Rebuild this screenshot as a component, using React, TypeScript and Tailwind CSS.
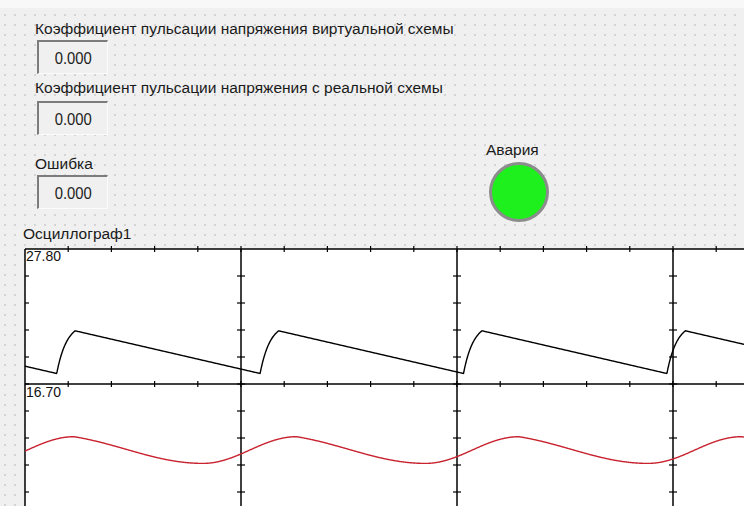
import React from 'react';

const W = 719;
const H = 257;
const GRID_X = [0, 216, 432, 648];
const GRID_Y = [0, 135];

// sawtooth: fast exponential charge, then a slow linear discharge
function sawPoints() {
  const period = 203.4;
  const rise = 18.5;
  const yMin = 124.5;
  const yPeak = 81.8;
  const tau = 10;
  const firstMin = 31.7;
  const pts: string[] = [];
  for (let x = 0; x <= W; x += 0.5) {
    const t = (((x - firstMin) % period) + period) % period;
    let y: number;
    if (t < rise) {
      y = yMin - ((yMin - yPeak) * (1 - Math.exp(-t / tau))) / (1 - Math.exp(-rise / tau));
    } else {
      y = yPeak + ((yMin - yPeak) * (t - rise)) / (period - rise);
    }
    pts.push(`${x},${y.toFixed(2)}`);
  }
  return pts.join(' ');
}

// ripple: smooth wave, longer falling half with a sharper crest
function ripplePoints() {
  const period = 222.5;
  const fall = 129;
  const firstPeak = 49;
  const yP = 187.7;
  const yT = 214.4;
  const pts: string[] = [];
  for (let x = 0; x <= W; x += 0.5) {
    const t = (((x - firstPeak) % period) + period) % period;
    let y: number;
    if (t < fall) {
      const s = t / fall;
      const f = 0.5 * ((1 - Math.cos(Math.PI * s)) / 2) + 0.5 * Math.sin((Math.PI * s) / 2);
      y = yP + (yT - yP) * f;
    } else {
      const s = (t - fall) / (period - fall);
      y = yT - ((yT - yP) * (1 - Math.cos(Math.PI * s))) / 2;
    }
    pts.push(`${x},${y.toFixed(2)}`);
  }
  return pts.join(' ');
}

const Ticks = () => {
  const lines: React.ReactNode[] = [];
  GRID_Y.forEach((gy) => {
    for (let k = 1; k * 43.2 <= W; k++) {
      const x = k * 43.2;
      lines.push(<line key={`h${gy}-${k}`} x1={x} x2={x} y1={gy - 3} y2={gy + 3} />);
    }
  });
  GRID_X.forEach((gx) => {
    for (let k = 1; k * 27 <= H; k++) {
      const y = k * 27;
      lines.push(<line key={`v${gx}-${k}`} x1={gx === 0 ? 0 : gx - 4} x2={gx + 4} y1={y} y2={y} />);
    }
  });
  return <g stroke="#000" strokeWidth={1.2}>{lines}</g>;
};

const ValueBox = ({ value }: { value: string }) => (
  <div className="ml-[2px] w-[71px] h-[34px] border-t-2 border-l-2 border-r border-b border-t-[#7c7c7c] border-l-[#7c7c7c] border-r-[#fbfbfb] border-b-[#fbfbfb] bg-[#f0f0f0] flex items-center justify-center">
    <span className="text-[17px] leading-none text-[#222] scale-x-[0.87] mt-[2px]">{value}</span>
  </div>
);

const Label = ({ children, className = '' }: { children: React.ReactNode; className?: string }) => (
  <div className={`text-[15.5px] leading-[16px] text-[#1a1a1a] whitespace-nowrap ${className}`}>{children}</div>
);

export default function App() {
  return (
    <div className="w-[744px] h-[506px] overflow-hidden bg-[#f0f0f0] bg-[radial-gradient(circle,#d4d4d4_0.8px,transparent_1.2px)] bg-[length:10px_10px] flex flex-col font-['Liberation_Sans',Arial,sans-serif]">
      <div className="h-[8px] shrink-0 bg-[#f8f8f8]" />

      {/* measurements + alarm lamp */}
      <div className="flex h-[218px] shrink-0">
        <div className="w-[486px] pl-[35px] pt-[13px] flex flex-col">
          <Label>Коэффициент пульсации напряжения виртуальной схемы</Label>
          <div className="mt-[3px]">
            <ValueBox value="0.000" />
          </div>
          <Label className="mt-[6px]">Коэффициент пульсации напряжения с реальной схемы</Label>
          <div className="mt-[5px]">
            <ValueBox value="0.000" />
          </div>
          <Label className="mt-[21px]">Ошибка</Label>
          <div className="mt-[3px]">
            <ValueBox value="0.000" />
          </div>
        </div>
        <div className="pt-[134px] flex flex-col">
          <Label>Авария</Label>
          <div className="mt-[4px] ml-[3px] w-[60px] h-[60px] rounded-full border-[3px] border-[#8c8c8c] bg-[#1ef01e]" />
        </div>
      </div>

      <Label className="pl-[23px]">Осциллограф1</Label>

      {/* oscilloscope */}
      <div className="mt-[7px] flex flex-1">
        <div className="w-[25px] shrink-0" />
        <div className="relative flex-1 bg-white">
          <svg width={W} height={H} className="overflow-visible block">
            <g stroke="#000" strokeWidth={1.5}>
              {GRID_X.map((x) => (
                <line key={x} x1={x} x2={x} y1={0} y2={H} />
              ))}
              {GRID_Y.map((y) => (
                <line key={y} x1={0} x2={W} y1={y} y2={y} />
              ))}
            </g>
            <Ticks />
            <polyline points={sawPoints()} fill="none" stroke="#000" strokeWidth={1.4} />
            <polyline points={ripplePoints()} fill="none" stroke="#c8232f" strokeWidth={1.4} />
          </svg>
          <span className="absolute left-[1px] top-0 text-[14px] leading-[14px] text-[#111]">27.80</span>
          <span className="absolute left-[1px] top-[136px] text-[14px] leading-[14px] text-[#111]">16.70</span>
        </div>
      </div>
    </div>
  );
}
